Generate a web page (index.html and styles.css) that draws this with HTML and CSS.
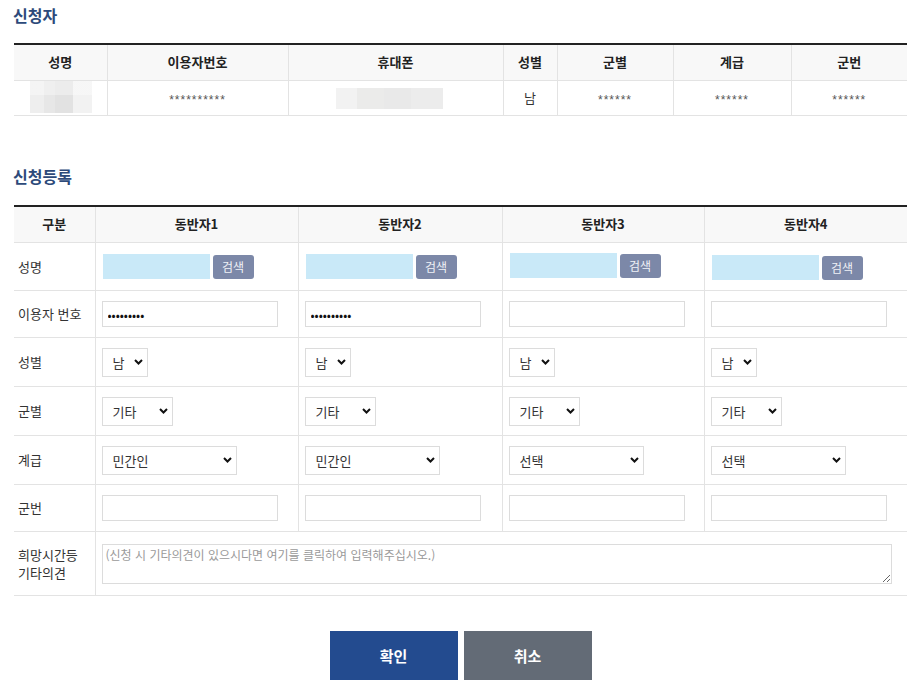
FILE: index.html
```html
<!DOCTYPE html>
<html lang="ko">
<head>
<meta charset="utf-8">
<title>신청</title>
<link rel="stylesheet" href="styles.css">
</head>
<body>
<div class="page">
  <h2 class="sec-title first">신청자</h2>
  <table class="tbl info">
    <colgroup>
      <col class="i1"><col class="i2"><col class="i3"><col class="i4"><col class="i5"><col class="i6"><col class="i7">
    </colgroup>
    <thead>
      <tr><th>성명</th><th>이용자번호</th><th>휴대폰</th><th>성별</th><th>군별</th><th>계급</th><th>군번</th></tr>
    </thead>
    <tbody>
      <tr>
        <td><div class="blur name-blur"></div></td>
        <td class="mask">**********</td>
        <td><div class="blur phone-blur"></div></td>
        <td>남</td>
        <td class="mask">******</td>
        <td class="mask">******</td>
        <td class="mask">******</td>
      </tr>
    </tbody>
  </table>

  <h2 class="sec-title second">신청등록</h2>
  <table class="tbl reg">
    <colgroup>
      <col class="r1"><col class="r2"><col class="r3"><col class="r4"><col class="r5">
    </colgroup>
    <thead>
      <tr><th>구분</th><th>동반자1</th><th>동반자2</th><th>동반자3</th><th>동반자4</th></tr>
    </thead>
    <tbody>
      <tr class="row-name">
        <td class="lbl">성명</td>
        <td><div class="name-box"><input class="name-in" type="text"><button class="btn-search" type="button">검색</button></div></td>
        <td><div class="name-box"><input class="name-in" type="text"><button class="btn-search" type="button">검색</button></div></td>
        <td><div class="name-box up"><input class="name-in" type="text"><button class="btn-search" type="button">검색</button></div></td>
        <td><div class="name-box down"><input class="name-in" type="text"><button class="btn-search" type="button">검색</button></div></td>
      </tr>
      <tr class="row-id">
        <td class="lbl">이용자 번호</td>
        <td><input class="txt" type="password" value="123456789"></td>
        <td><input class="txt" type="password" value="1234567890"></td>
        <td><input class="txt" type="text"></td>
        <td><input class="txt" type="text"></td>
      </tr>
      <tr class="row-sel">
        <td class="lbl">성별</td>
        <td><select class="sel s-sex"><option>남</option><option>여</option></select></td>
        <td><select class="sel s-sex"><option>남</option><option>여</option></select></td>
        <td><select class="sel s-sex"><option>남</option><option>여</option></select></td>
        <td><select class="sel s-sex"><option>남</option><option>여</option></select></td>
      </tr>
      <tr class="row-sel">
        <td class="lbl">군별</td>
        <td><select class="sel s-mil"><option>기타</option></select></td>
        <td><select class="sel s-mil"><option>기타</option></select></td>
        <td><select class="sel s-mil"><option>기타</option></select></td>
        <td><select class="sel s-mil"><option>기타</option></select></td>
      </tr>
      <tr class="row-sel">
        <td class="lbl">계급</td>
        <td><select class="sel s-rank"><option>민간인</option></select></td>
        <td><select class="sel s-rank"><option>민간인</option></select></td>
        <td><select class="sel s-rank"><option>선택</option></select></td>
        <td><select class="sel s-rank"><option>선택</option></select></td>
      </tr>
      <tr class="row-id">
        <td class="lbl">군번</td>
        <td><input class="txt" type="text"></td>
        <td><input class="txt" type="text"></td>
        <td><input class="txt" type="text"></td>
        <td><input class="txt" type="text"></td>
      </tr>
      <tr class="row-memo">
        <td class="lbl"><span class="lbl-line">희망시간등</span><span class="lbl-line">기타의견</span></td>
        <td colspan="4"><textarea class="memo" placeholder="(신청 시 기타의견이 있으시다면 여기를 클릭하여 입력해주십시오.)"></textarea></td>
      </tr>
    </tbody>
  </table>

  <div class="actions">
    <button class="btn-big ok" type="button">확인</button>
    <button class="btn-big cancel" type="button">취소</button>
  </div>
</div>
</body>
</html>
```
FILE: styles.css
```css
* { box-sizing: border-box; }

body {
  margin: 0;
  background: #fff;
  color: #333;
  font-family: "Noto Sans CJK KR", "Noto Sans", sans-serif;
  font-size: 13px;
}

.page {
  width: 914px;
  padding: 0 7px 0 14px;
}

.sec-title {
  margin: 0 0 0 -1px;
  font-size: 16px;
  line-height: 20px;
  font-weight: 700;
  color: #2d4a7a;
}
.sec-title.first { padding-top: 5px; }
.sec-title.second { margin-top: 50px; }

.tbl {
  width: 893px;
  border-collapse: collapse;
  table-layout: fixed;
  border-top: 2px solid #222;
}
.tbl th {
  background: #f8f8f8;
  font-size: 13px;
  font-weight: 700;
  color: #222;
  line-height: 16px;
  padding: 0;
  text-align: center;
  border-left: 1px solid #e3e3e3;
  border-bottom: 1px solid #e3e3e3;
}
.tbl td {
  padding: 0;
  border-left: 1px solid #e3e3e3;
  border-bottom: 1px solid #e3e3e3;
  line-height: 16px;
}
.tbl th:first-child, .tbl td:first-child { border-left: none; }

.info { margin-top: 18px; }
.info th { height: 36px; }
.info td { height: 35px; text-align: center; color: #333; font-size: 13px; }
.info td.mask {
  font-family: "Liberation Sans", "Noto Sans", sans-serif;
  font-size: 12px;
  color: #555;
  letter-spacing: 1px;
  padding-top: 4px;
}
.i1 { width: 93px; } .i2 { width: 181px; } .i3 { width: 215px; } .i4 { width: 54px; }
.i5 { width: 116px; } .i6 { width: 118px; } .i7 { width: 116px; }

.blur { display: block; }
.name-blur {
  width: 62px;
  height: 32px;
  margin: -1px 0 0 16px;
  background:
    linear-gradient(180deg, rgba(255,255,255,0.35) 0 45%, rgba(255,255,255,0) 45% 100%),
    linear-gradient(90deg, #eeeeee 0 22%, #e7e7e7 22% 40%, #e2e2e2 40% 70%, #f2f2f2 70% 100%);
}
.phone-blur {
  width: 107px;
  height: 21px;
  margin: 2px 0 0 47px;
  background: linear-gradient(90deg, #f2f2f2 0 20%, #ebebea 20% 45%, #e9e9e9 45% 70%, #ececec 70% 100%);
}

.reg { margin-top: 19px; }
.reg th { height: 37px; }
.r1 { width: 81px; } .r2 { width: 203px; } .r3 { width: 204px; } .r4 { width: 202px; } .r5 { width: 203px; }
.reg td { padding-left: 6px; vertical-align: middle; }
.reg td.lbl { padding-left: 4px; font-size: 13px; color: #333; }

.row-name td { height: 48px; }
.row-id td { height: 47px; }
.row-sel td { height: 49px; }
.row-memo td { height: 64px; }
.lbl-line { display: block; line-height: 18px; }

.name-box { display: flex; align-items: center; gap: 3px; padding-left: 1px; }
.name-box.up { margin-top: -2px; }
.name-box.down { margin-top: 2px; }
.name-in {
  width: 107px;
  height: 25px;
  border: none;
  background: #c9e9f8;
  padding: 0;
}
.btn-search {
  width: 41px;
  height: 24px;
  border: none;
  border-radius: 3px;
  background: #7c88a8;
  color: #f0f2f7;
  font-family: inherit;
  font-size: 12px;
  line-height: 24px;
  padding: 0;
}

.txt {
  display: block;
  width: 176px;
  height: 26px;
  border: 1px solid #dcdcdc;
  background: #fff;
  font-family: inherit;
  font-size: 12px;
  color: #111;
  padding: 0 5px;
}

.sel {
  -webkit-appearance: none;
  appearance: none;
  display: block;
  height: 29px;
  border: 1px solid #dcdcdc;
  border-radius: 0;
  background: #fff url("data:image/svg+xml,%3Csvg xmlns='http://www.w3.org/2000/svg' width='9' height='6' viewBox='0 0 9 6'%3E%3Cpath d='M1 1l3.5 3.5L8 1' fill='none' stroke='%23111' stroke-width='2'/%3E%3C/svg%3E") no-repeat right 4px center;
  font-family: inherit;
  font-size: 13px;
  color: #333;
  padding: 0 0 0 10px;
}
.s-sex { width: 46px; }
.s-mil { width: 71px; }
.s-rank { width: 135px; }

.memo {
  display: block;
  width: 790px;
  height: 40px;
  border: 1px solid #dcdcdc;
  font-family: inherit;
  font-size: 12px;
  line-height: 16px;
  color: #333;
  padding: 2px 3px;
  resize: both;
}
.memo::placeholder { color: #9a9a9a; }

.actions {
  display: flex;
  justify-content: center;
  gap: 6px;
  margin-top: 35px;
}
.btn-big {
  width: 128px;
  height: 49px;
  border: none;
  color: #fff;
  font-family: inherit;
  font-size: 15px;
  font-weight: 700;
  padding: 0;
}
.btn-big.ok { background: #234b8f; }
.btn-big.cancel { background: #636b76; }
```
